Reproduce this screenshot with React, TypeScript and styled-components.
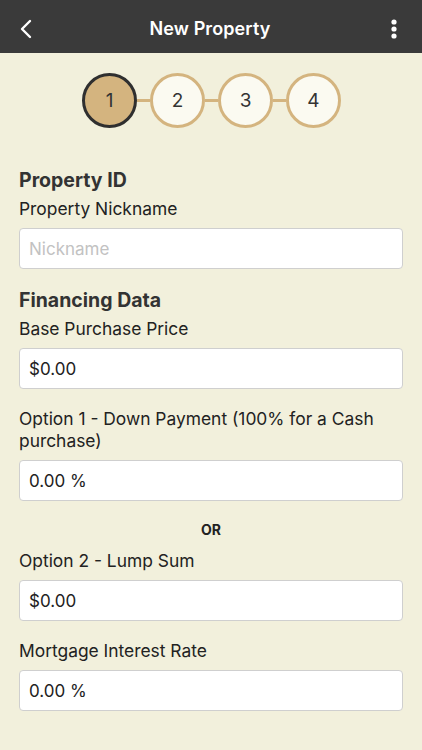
import React from 'react';
import styled, { createGlobalStyle } from 'styled-components';

const colors = {
    BAR: '#3a3a3a',
    PAGE: '#f2f0dc',
    TAN: '#d4b47f',
    STEP_BG: '#fbfaf1',
    TEXT: '#222222',
    HEADING: '#333333',
};

const GlobalStyle = createGlobalStyle`
    html, body {
        margin: 0;
        padding: 0;
        background: ${colors.PAGE};
        font-family: Inter, "Noto Sans", "Liberation Sans", sans-serif;
    }
    * {
        box-sizing: border-box;
    }
`;

const steps = [1, 2, 3, 4];

type Field = {
    label: string;
    value?: string;
    placeholder?: string;
};

const App = () => {
    return (
        <Page>
            <GlobalStyle />
            <TopBar>
                <BarButton aria-label="Back">
                    <svg width="14" height="22" viewBox="0 0 14 22">
                        <path d="M11 3 L3 11 L11 19" fill="none" stroke="#fff" strokeWidth="2.4" strokeLinecap="round" strokeLinejoin="round" />
                    </svg>
                </BarButton>
                <Title>New Property</Title>
                <BarButton aria-label="More">
                    <svg width="6" height="22" viewBox="0 0 6 22">
                        <circle cx="3" cy="4" r="2.6" fill="#fff" />
                        <circle cx="3" cy="11" r="2.6" fill="#fff" />
                        <circle cx="3" cy="18" r="2.6" fill="#fff" />
                    </svg>
                </BarButton>
            </TopBar>

            <Stepper>
                {steps.map((n, i) => (
                    <React.Fragment key={n}>
                        {i > 0 && <Connector />}
                        <Step active={n === 1}>{n}</Step>
                    </React.Fragment>
                ))}
            </Stepper>

            <Form>
                <SectionTitle>Property ID</SectionTitle>
                <FieldGroup field={{ label: 'Property Nickname', placeholder: 'Nickname' }} />

                <SectionTitle>Financing Data</SectionTitle>
                <FieldGroup field={{ label: 'Base Purchase Price', value: '$0.00' }} />
                <FieldGroup field={{ label: 'Option 1 - Down Payment (100% for a Cash purchase)', value: '0.00 %' }} />
                <OrText>OR</OrText>
                <FieldGroup field={{ label: 'Option 2 - Lump Sum', value: '$0.00' }} />
                <FieldGroup field={{ label: 'Mortgage Interest Rate', value: '0.00 %' }} />
            </Form>
        </Page>
    );
};

const FieldGroup = ({ field }: { field: Field }) => (
    <Group>
        <Label>{field.label}</Label>
        <TextInput defaultValue={field.value} placeholder={field.placeholder} />
    </Group>
);

const Page = styled.div`
    width: 422px;
    min-height: 750px;
    background: ${colors.PAGE};
`;

const TopBar = styled.div`
    height: 53px;
    background: ${colors.BAR};
    display: flex;
    align-items: center;
    justify-content: space-between;
    padding: 0 16px 0 14px;
`;

const BarButton = styled.div`
    width: 24px;
    height: 24px;
    display: flex;
    align-items: center;
    justify-content: center;
    margin-top: 4px;
`;

const Title = styled.h1`
    margin: 4px 0 0;
    color: #ffffff;
    font-size: 18px;
    font-weight: 600;
    letter-spacing: 0.1px;
`;

const Stepper = styled.div`
    display: flex;
    align-items: center;
    justify-content: center;
    padding: 20px 0 0;
    margin-left: 1px;
`;

const Step = styled.div<{ active?: boolean }>`
    width: 55px;
    height: 55px;
    border-radius: 50%;
    border: 3px solid ${p => (p.active ? '#2f2f2f' : colors.TAN)};
    background: ${p => (p.active ? colors.TAN : colors.STEP_BG)};
    display: flex;
    align-items: center;
    justify-content: center;
    font-size: 19px;
    color: #333;
`;

const Connector = styled.div`
    width: 13px;
    height: 3px;
    background: ${colors.TAN};
`;

const Form = styled.div`
    padding: 40px 19px 0;
    display: flex;
    flex-direction: column;
`;

const SectionTitle = styled.h2`
    margin: 0 0 6px;
    font-size: 19.5px;
    line-height: 24px;
    font-weight: 700;
    color: ${colors.HEADING};
`;

const Group = styled.div`
    display: flex;
    flex-direction: column;
    margin-bottom: 19px;
`;

const Label = styled.label`
    font-size: 17.4px;
    line-height: 22px;
    color: ${colors.TEXT};
    margin-bottom: 8px;
    padding-right: 20px;
`;

const TextInput = styled.input`
    height: 41px;
    width: 100%;
    border: 1px solid #cfcfcf;
    border-radius: 4px;
    background: #ffffff;
    padding: 0 9px;
    font-family: inherit;
    font-size: 17px;
    color: ${colors.TEXT};
    outline: none;

    &::placeholder {
        color: #c2c2c2;
    }
`;

const OrText = styled.div`
    text-align: center;
    font-size: 14px;
    line-height: 18px;
    font-weight: 700;
    color: ${colors.TEXT};
    margin: 1px 0 11px;
`;

export default App;
